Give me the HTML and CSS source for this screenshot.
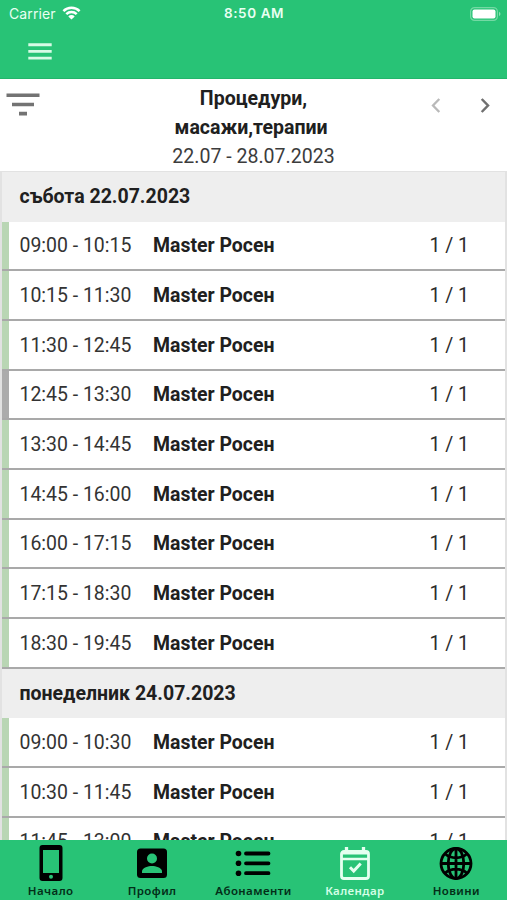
FILE: index.html
```html
<!DOCTYPE html>
<html lang="bg">
<head>
<meta charset="utf-8">
<title>Календар</title>
<link rel="stylesheet" href="styles.css">
</head>
<body>
<div class="app">
  <header class="topbar">
    <div class="status">
      <div class="carrier"><span>Carrier</span>
        <svg class="wifi" width="19" height="14" viewBox="0 0 18 14" fill="none" stroke="currentColor" stroke-width="2.5"><path d="M.9 5.1a11.6 11.6 0 0 1 16.2 0M3.8 8.2a7.4 7.4 0 0 1 10.4 0"/><path d="M9 13.6 5.8 10.400a4.5 4.5 0 0 1 6.400 0z" fill="currentColor" stroke="none"/></svg>
      </div>
      <span class="clock">8:50 AM</span>
      <svg class="battery" width="31" height="14" viewBox="0 0 31 14"><rect x=".6" y=".6" width="26.800" height="12.800" rx="4" fill="none" stroke="#74d9a4" stroke-width="1.200"/><rect x="2.500" y="2.500" width="23" height="9" rx="2" fill="#fff"/><path d="M29 4.800q3 2.200 0 4.400z" fill="#8be0b3"/></svg>
    </div>
    <svg class="menu" width="24" height="17" viewBox="0 0 24 17" stroke="#d8fbe6" stroke-width="2.900"><path d="M.3 1.700h23.400M.3 8.400h23.400M.3 15.100h23.400"/></svg>
  </header>
  <section class="heading">
    <svg class="filter" width="34" height="24" viewBox="0 0 34 24" stroke="#737373" stroke-width="3.600"><path d="M.5 2.300h33M6 11.500h22M13 20.600h8"/></svg>
    <div class="title"><h1>Процедури,<br>масажи,терапии&nbsp;</h1><p>22.07 - 28.07.2023</p></div>
    <div class="arrows">
      <svg width="10" height="15" viewBox="0 0 10 15" fill="none" stroke="#b9b9b9" stroke-width="2.300"><path d="M8.300 1 2 7.500l6.300 6.500"/></svg>
      <svg width="10" height="15" viewBox="0 0 10 15" fill="none" stroke="#707070" stroke-width="2.500"><path d="m1.700 1 6.300 6.500L1.700 14"/></svg>
    </div>
  </section>
  <main class="schedule">
    <h2 class="day">събота 22.07.2023</h2>
    <div class="slot"><span class="time">09:00 - 10:15</span><b>Master Росен</b><span class="count">1 / 1</span></div>
    <div class="slot"><span class="time">10:15 - 11:30</span><b>Master Росен</b><span class="count">1 / 1</span></div>
    <div class="slot"><span class="time">11:30 - 12:45</span><b>Master Росен</b><span class="count">1 / 1</span></div>
    <div class="slot busy"><span class="time">12:45 - 13:30</span><b>Master Росен</b><span class="count">1 / 1</span></div>
    <div class="slot"><span class="time">13:30 - 14:45</span><b>Master Росен</b><span class="count">1 / 1</span></div>
    <div class="slot"><span class="time">14:45 - 16:00</span><b>Master Росен</b><span class="count">1 / 1</span></div>
    <div class="slot"><span class="time">16:00 - 17:15</span><b>Master Росен</b><span class="count">1 / 1</span></div>
    <div class="slot"><span class="time">17:15 - 18:30</span><b>Master Росен</b><span class="count">1 / 1</span></div>
    <div class="slot"><span class="time">18:30 - 19:45</span><b>Master Росен</b><span class="count">1 / 1</span></div>
    <h2 class="day">понеделник 24.07.2023</h2>
    <div class="slot"><span class="time">09:00 - 10:30</span><b>Master Росен</b><span class="count">1 / 1</span></div>
    <div class="slot"><span class="time">10:30 - 11:45</span><b>Master Росен</b><span class="count">1 / 1</span></div>
    <div class="slot"><span class="time">11:45 - 13:00</span><b>Master Росен</b><span class="count">1 / 1</span></div>
  </main>
  <nav class="tabs">
    <a class="tab"><svg width="36" height="36" viewBox="0 0 36 36"><path fill-rule="evenodd" d="M9.500 0h17a3 3 0 0 1 3 3v30a3 3 0 0 1-3 3h-17a3 3 0 0 1-3-3V3a3 3 0 0 1 3-3zM10 5v23h16V5zM18 29.800a2 2 0 1 0 0 4 2 2 0 0 0 0-4z"/></svg><span>Начало</span></a>
    <a class="tab"><svg width="36" height="36" viewBox="0 0 36 36"><rect x="3" y="3.500" width="30" height="29.500" rx="3.500"/><g fill="#28c376"><circle cx="18" cy="13.500" r="5"/><path d="M8 28v-1.700c0-3.300 6.600-5.200 10-5.200s10 1.900 10 5.200V28z"/></g></svg><span>Профил</span></a>
    <a class="tab"><svg width="36" height="36" viewBox="0 0 36 36"><g><circle cx="3.500" cy="8.500" r="2.800"/><circle cx="3.500" cy="18.300" r="2.800"/><circle cx="3.500" cy="28.200" r="2.800"/></g><path d="M11 8.500h22.500M11 18.300h22.500M11 28.200h22.500" stroke="#000" stroke-width="3.800" stroke-linecap="round"/></svg><span>Абонаменти</span></a>
    <a class="tab active"><svg width="36" height="36" viewBox="0 0 36 36" fill="none" stroke="#e5fff0"><path d="M7 6.500h22a2.500 2.500 0 0 1 2.500 2.500V31a2.500 2.500 0 0 1-2.500 2.500H7A2.500 2.500 0 0 1 4.500 31V9a2.500 2.500 0 0 1 2.500-2.500z" stroke-width="2.800"/><path d="M4.500 8h27" stroke-width="3"/><path d="M4.500 14h27" stroke-width="2.500"/><path d="M9.500 2v6M26.500 2v6" stroke-width="3.300"/><path d="m13 22.300 3.700 3.700 7-7.500" stroke-width="3"/></svg><span>Календар</span></a>
    <a class="tab"><svg width="36" height="36" viewBox="0 0 36 36" fill="none" stroke="#000" stroke-width="2.800"><circle cx="18" cy="18.500" r="15"/><ellipse cx="18" cy="18.500" rx="7.800" ry="15"/><path d="M18 3.300v30.400M2.800 18.500h30.400M6.600 8.500Q11.500 12.800 18 12.800t11.400-4.300M6.600 28.500Q11.500 24.200 18 24.200t11.400 4.300"/></svg><span>Новини</span></a>
  </nav>
</div>
</body>
</html>
```
FILE: styles.css
```css
* { box-sizing: border-box; }
body { margin: 0; background: #fff; color: #202020; font-family: Roboto, "Noto Sans", sans-serif; }
.app { display: flex; flex-direction: column; width: 507px; height: 900px; overflow: hidden; }
.topbar { flex: none; height: 79px; background: #28c376; border-bottom: 1px solid #23b56b; color: #e9fff2; }
.status { display: grid; grid-template-columns: 1fr auto 1fr; align-items: center; height: 27px; padding: 0 6px 0 7px; font: 14px/27px Inter, sans-serif; }
.carrier { display: flex; align-items: center; gap: 6px; padding-left: 2px; letter-spacing: .1px; }
.carrier .wifi { color: #fff; margin-top: -2px; }
.clock { font-weight: 600; font-size: 13.5px; letter-spacing: .6px; }
.battery { justify-self: end; }
.menu { display: block; margin: 16px 0 0 28px; }
.heading { flex: none; display: grid; grid-template-columns: 1fr 200px 1fr; height: 92px; padding: 4px 0; }
.filter { margin: 10px 0 0 6px; }
.title { text-align: center; line-height: 29.2px; font-size: 19.55px; padding-top: .6px; }
.title h1 { margin: 0; font-size: inherit; font-weight: 700; }
.title p { margin: 0; color: #3c3c3c; }
.arrows { display: flex; justify-content: flex-end; gap: 39px; margin: 15px 17px 0 0; }
.schedule { flex: 1; min-height: 0; overflow: hidden; border: 2px solid #e2e2e2; border-width: 1px 2px 0; }
.day { display: flex; align-items: center; height: 49.67px; margin: 0; padding: 0 0 0 17.5px; background: #eee; font-size: 19.5px; font-weight: 700; }
.slot { display: flex; align-items: center; height: 49.67px; padding: 1px 36px 0 17.5px; border-bottom: 2px solid #a9a9a9; background: linear-gradient(to right, #b9d6b4 7px, #fff 7px); font-size: 19.45px; }
.busy { background: linear-gradient(to right, #acacac 7px, #fff 7px); }
.time { width: 133.5px; color: #333; }
.slot b { font-weight: 700; }
.count { margin-left: auto; color: #2b2b2b; }
.tabs { flex: none; display: grid; grid-template-columns: repeat(5, 1fr); height: 60px; padding-top: 5px; background: #28c376; }
.tab { display: flex; flex-direction: column; align-items: center; color: #032e18; font: 600 11.5px/20px "Noto Sans", sans-serif; letter-spacing: .4px; }
.tab svg { flex: none; }
.active { color: #d5ffe6; }
```
